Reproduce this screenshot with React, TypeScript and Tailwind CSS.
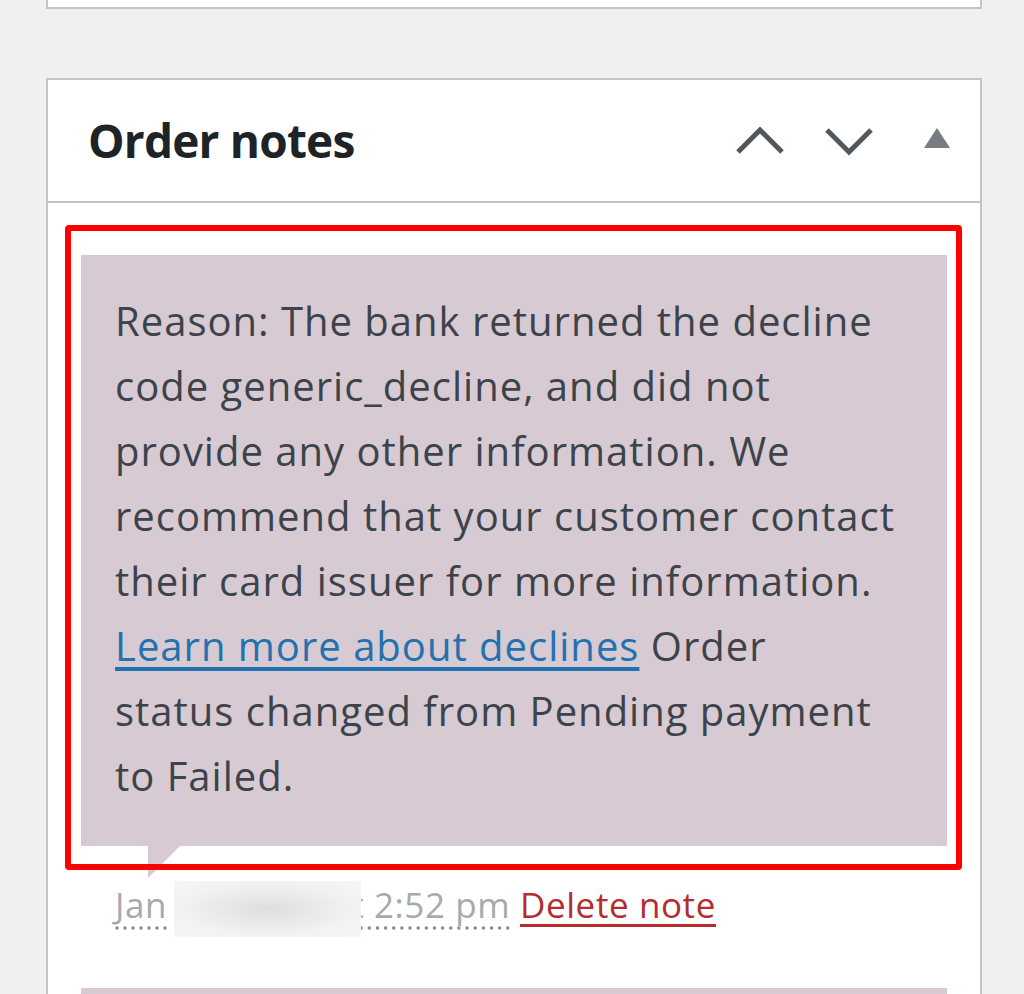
import React from "react";

const lines = [
  "Reason: The bank returned the decline",
  "code generic_decline, and did not",
  "provide any other information. We",
  "recommend that your customer contact",
  "their card issuer for more information.",
];

function Chevron({ up }: { up?: boolean }) {
  return (
    <svg width="48" height="30" viewBox="0 0 48 30" className="block">
      <polyline
        points={up ? "2,26 24,4 46,26" : "2,4 24,26 46,4"}
        fill="none"
        stroke="#50575e"
        strokeWidth="5"
      />
    </svg>
  );
}

export default function App() {
  return (
    <div
      className="h-[994px] overflow-hidden bg-[#f0f0f1] pl-[46px]"
      style={{ fontFamily: '"Open Sans", "Noto Sans", sans-serif' }}
    >
      <div className="w-[936px]">
        {/* previous box, cut off at top */}
        <div className="h-[9px] border-x-2 border-b-2 border-[#c3c4c7] bg-white" />

        {/* Order notes box */}
        <div className="mt-[69px] border-2 border-[#c3c4c7] bg-white">
          <div className="flex h-[123px] items-center justify-between border-b-2 border-[#c3c4c7] pl-[40px] pr-[30px]">
            <h2 className="text-[46px] font-bold tracking-[-0.8px] text-[#1d2327]">
              Order notes
            </h2>
            <div className="flex items-center">
              <Chevron up />
              <div className="ml-[41px]">
                <Chevron />
              </div>
              <svg width="26" height="20" viewBox="0 0 26 20" className="ml-[51px] mt-[-6px] block">
                <polygon points="0,20 13,0 26,20" fill="#787c82" />
              </svg>
            </div>
          </div>

          <div className="relative px-[33px] pt-[52px]">
            <ul>
              <li>
                <div className="relative bg-[#d7cad2] px-[34px] pt-[33px] pb-[38px] text-[40px] leading-[65px] tracking-[1px] text-[#3c434a]">
                  <p className="whitespace-nowrap">
                    {lines.map((l) => (
                      <React.Fragment key={l}>
                        {l}
                        <br />
                      </React.Fragment>
                    ))}
                    <a href="#" className="text-[#2271b1] underline underline-offset-[6px]">
                      Learn more about declines
                    </a>{" "}
                    Order
                    <br />
                    status changed from Pending payment
                    <br />
                    to Failed.
                  </p>
                  <span className="absolute bottom-[-32px] left-[67px] h-0 w-0 border-r-[32px] border-t-[32px] border-r-transparent border-t-[#d7cad2]" />
                </div>
                <p className="mt-[35px] mb-[51px] pl-[34px] text-[35px] leading-[48px] tracking-[0.6px] text-[#a7aaad]">
                  <span className="underline decoration-dotted decoration-[#888] underline-offset-[8px]">
                    Jan
                    <span className="relative z-10 ml-[7px] -mr-[10px] inline-block h-[56px] w-[187px] align-middle bg-[radial-gradient(ellipse_at_center,#dedede_0%,#f2f2f2_65%,#f6f6f6_100%)]" />
                    t 2:52 pm
                  </span>{" "}
                  <a href="#" className="text-[#b32d2e] underline underline-offset-[6px]">
                    Delete note
                  </a>
                </p>
              </li>
              <li>
                <div className="h-[40px] bg-[#d7cad2]" />
              </li>
            </ul>

            {/* annotation frame */}
            <div className="pointer-events-none absolute left-[17px] top-[22px] h-[645px] w-[897px] rounded-[4px] border-[6px] border-[#ff0000]" />
          </div>
        </div>
      </div>
    </div>
  );
}
